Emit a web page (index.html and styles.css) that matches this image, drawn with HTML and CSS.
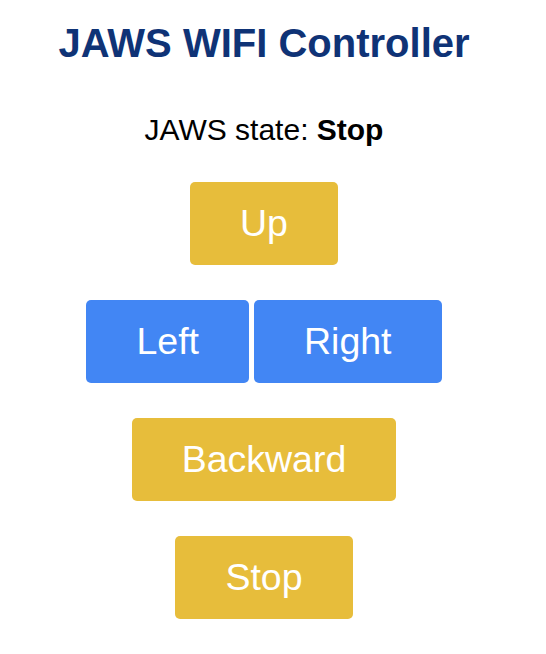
FILE: index.html
```html
<!DOCTYPE html>
<html lang="en">
<head>
<meta charset="utf-8">
<title>JAWS WIFI Controller</title>
<link rel="stylesheet" href="styles.css">
</head>
<body>
<div class="page">
  <h1 class="title">JAWS WIFI Controller</h1>
  <p class="state">JAWS state: <strong>Stop</strong></p>
  <div class="controls">
    <button class="btn btn-gold">Up</button>
    <div class="row">
      <button class="btn btn-blue">Left</button>
      <button class="btn btn-blue">Right</button>
    </div>
    <button class="btn btn-gold">Backward</button>
    <button class="btn btn-gold">Stop</button>
  </div>
</div>
</body>
</html>
```

FILE: styles.css
```css
html, body {
  margin: 0;
  padding: 0;
  background: #ffffff;
}

body {
  font-family: "Liberation Sans", Arial, Helvetica, sans-serif;
  color: #000000;
}

.page {
  width: 528px;
  display: flex;
  flex-direction: column;
  align-items: center;
}

.title {
  margin: 20px 0 0;
  font-size: 40px;
  line-height: 46px;
  font-weight: bold;
  color: #0f3376;
}

.state {
  margin: 47px 0 0;
  font-size: 30px;
  line-height: 34px;
}

.state strong {
  font-weight: bold;
}

.controls {
  margin-top: 35px;
  display: flex;
  flex-direction: column;
  align-items: center;
  gap: 35px;
}

.row {
  display: flex;
  gap: 5px;
}

.btn {
  border: none;
  border-radius: 5px;
  padding: 20px 50px;
  font-family: "Liberation Sans", Arial, Helvetica, sans-serif;
  font-size: 37.5px;
  line-height: normal;
  color: #ffffff;
  cursor: pointer;
}

.btn-gold {
  background-color: #e7bd3b;
}

.btn-blue {
  background-color: #4286f4;
}
```
